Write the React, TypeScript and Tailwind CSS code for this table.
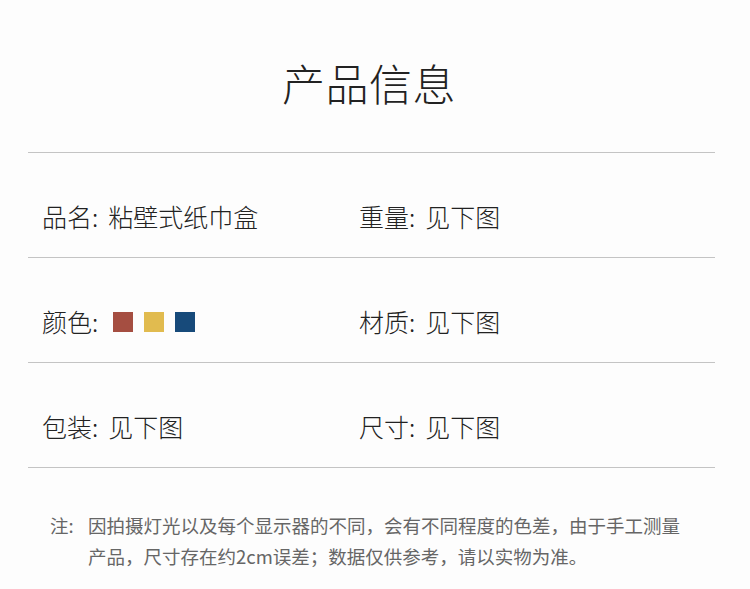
import React from 'react';

const cjk = { fontFamily: '"Noto Sans CJK SC", "Noto Sans", sans-serif' };

const Field = ({ label, children }: { label: string; children: React.ReactNode }) => (
  <div className="flex items-center">
    <span>{label}:</span>
    <span className="ml-[10px] flex items-center">{children}</span>
  </div>
);

const Row = ({ left, right }: { left: React.ReactNode; right: React.ReactNode }) => (
  <div className="flex h-[105px] items-center border-b border-[#c4c4c4] pt-[24px]">
    <div className="w-[331px] pl-[14px]">{left}</div>
    <div>{right}</div>
  </div>
);

const Swatch = ({ color }: { color: string }) => <span className={`inline-block h-5 w-5 ${color}`} />;

const App = () => {
  return (
    <div className="h-[589px] w-[750px] bg-[#fdfdfd] text-[#222]" style={cjk}>
      <h1 className="pt-[50px] pr-[12px] text-center text-[43px] font-extralight leading-[64px] tracking-[0.5px] text-[#222]">
        产品信息
      </h1>
      <div className="ml-[28px] mr-[35px] mt-[38px] border-t border-[#c4c4c4] text-[25px] font-light">
        <Row
          left={<Field label="品名">粘壁式纸巾盒</Field>}
          right={<Field label="重量">见下图</Field>}
        />
        <Row
          left={
            <Field label="颜色">
              <span className="ml-[5px] flex gap-[11px]">
                <Swatch color="bg-[#a54e41]" />
                <Swatch color="bg-[#e1bb4f]" />
                <Swatch color="bg-[#174a7a]" />
              </span>
            </Field>
          }
          right={<Field label="材质">见下图</Field>}
        />
        <Row
          left={<Field label="包装">见下图</Field>}
          right={<Field label="尺寸">见下图</Field>}
        />
      </div>
      <div className="mt-[42px] flex pl-[50px] text-[18.5px] leading-[31px] text-[#666]">
        <span className="w-[38px] shrink-0">注:</span>
        <p className="w-[596px]">
          因拍摄灯光以及每个显示器的不同，会有不同程度的色差，由于手工测量产品，尺寸存在约2cm误差；数据仅供参考，请以实物为准。
        </p>
      </div>
    </div>
  );
};

export default App;
